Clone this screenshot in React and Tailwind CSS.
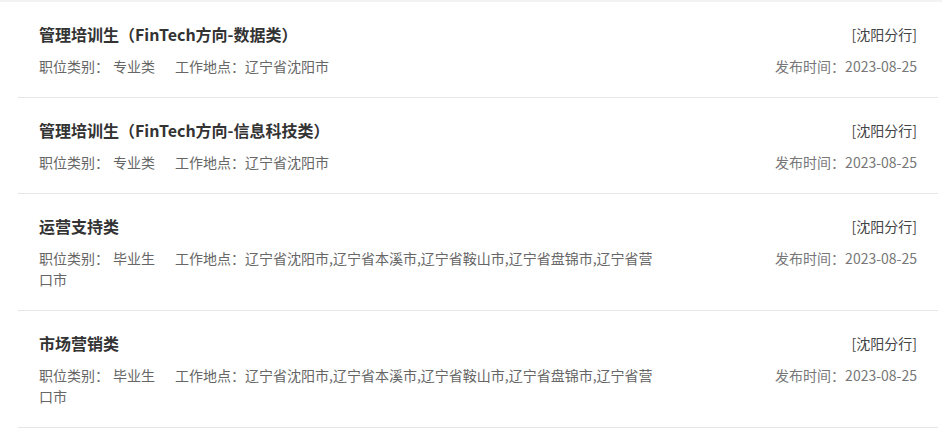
import React from "react";

const jobs = [
  { title: "管理培训生（FinTech方向-数据类）", cat: "专业类", loc: "辽宁省沈阳市" },
  { title: "管理培训生（FinTech方向-信息科技类）", cat: "专业类", loc: "辽宁省沈阳市" },
  { title: "运营支持类", cat: "毕业生", loc: "辽宁省沈阳市,辽宁省本溪市,辽宁省鞍山市,辽宁省盘锦市,辽宁省营口市" },
  { title: "市场营销类", cat: "毕业生", loc: "辽宁省沈阳市,辽宁省本溪市,辽宁省鞍山市,辽宁省盘锦市,辽宁省营口市" },
];

export default function App() {
  return (
    <div
      className="w-[942px] bg-white"
      style={{ fontFamily: '"Noto Sans CJK SC", "Noto Sans", sans-serif' }}
    >
      <div className="h-[2px] bg-[#f3f3f3]" />
      {jobs.map((j, i) => (
        <div
          key={i}
          className="ml-[18px] mr-[4px] flex justify-between border-b border-[#e6e6e6] px-[21px] pt-[20px] pb-[20px]"
        >
          <div className="w-[622px]">
            <div className="h-[24px] text-[16px] leading-[24px] font-bold text-[#333]">{j.title}</div>
            <div className="mt-[10px] text-[14px] leading-[21px] text-[#666]">
              <span>职位类别：</span>
              <span className="ml-[4px]">{j.cat}</span>
              <span className="ml-[20px]">工作地点：{j.loc}</span>
            </div>
          </div>
          <div className="flex flex-col items-end">
            <div className="h-[24px] text-[14px] leading-[24px] text-[#444]">[沈阳分行]</div>
            <div className="mt-[10px] text-[14px] leading-[21px] text-[#777]">发布时间：2023-08-25</div>
          </div>
        </div>
      ))}
    </div>
  );
}
